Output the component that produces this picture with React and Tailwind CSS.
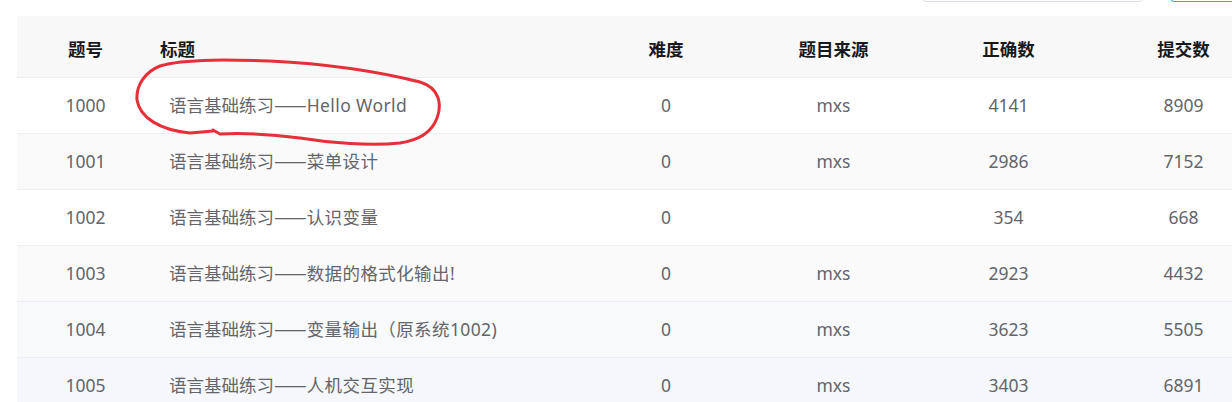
import React from "react";

const rows = [
  { id: 1000, title: "Hello World", level: 0, source: "mxs", ac: 4141, submit: 8909, bg: "bg-white" },
  { id: 1001, title: "菜单设计", level: 0, source: "mxs", ac: 2986, submit: 7152, bg: "bg-[#fafafa]" },
  { id: 1002, title: "认识变量", level: 0, source: "", ac: 354, submit: 668, bg: "bg-white" },
  { id: 1003, title: "数据的格式化输出!", level: 0, source: "mxs", ac: 2923, submit: 4432, bg: "bg-[#fafafa]" },
  { id: 1004, title: "变量输出（原系统1002)", level: 0, source: "mxs", ac: 3623, submit: 5505, bg: "bg-[#f8f9fb]" },
  { id: 1005, title: "人机交互实现", level: 0, source: "mxs", ac: 3403, submit: 6891, bg: "bg-[#f5f7fa]" },
];

const cols = "grid grid-cols-[137px_432px_160px_175px_175px_175px]";

export default function App() {
  return (
    <div className="relative w-[1232px] h-[402px] overflow-hidden bg-white font-['Noto_Sans','Noto_Sans_CJK_SC',sans-serif]">
      {/* Toolbar (mostly scrolled off the top) */}
      <div className="flex items-end h-4 overflow-hidden pl-[922px]">
        <div className="shrink-0 w-[221px] h-[34px] mb-[14px] rounded border border-[#dcdfe6] bg-white"></div>
        <div className="shrink-0 w-[90px] h-[34px] mb-[14px] ml-[27px] rounded border border-[#409eff] bg-white"></div>
      </div>

      {/* Table */}
      <div className="ml-[17px] w-[1254px]">
        <div className={`${cols} h-[62px] pt-[6px] items-center bg-[#f8f8f9] border-b border-[#ebeef5] text-[17.5px] font-bold text-[#17191c]`}>
          <div className="text-center">题号</div>
          <div className="pl-[6px]">标题</div>
          <div className="text-center">难度</div>
          <div className="text-center">题目来源</div>
          <div className="text-center">正确数</div>
          <div className="text-center">提交数</div>
        </div>
        {rows.map((r) => (
          <div
            key={r.id}
            className={`${cols} h-[56px] items-center border-b border-[#ebeef5] text-[17.5px] text-[#63656b] ${r.bg}`}
          >
            <div className="text-center">{r.id}</div>
            <div className="pl-[15px] whitespace-nowrap">
              语言基础练习
              <span className="text-[19.5px] leading-none font-['Noto_Sans_CJK_SC',sans-serif]">——</span>
              <span className="tracking-[0.4px]">{r.title}</span>
            </div>
            <div className="text-center">{r.level}</div>
            <div className="text-center">{r.source}</div>
            <div className="text-center">{r.ac}</div>
            <div className="text-center">{r.submit}</div>
          </div>
        ))}
      </div>

      {/* Hand-drawn annotation */}
      <svg className="absolute left-0 top-0 pointer-events-none" width="1232" height="402">
        <path
          d="M213 131 L190 133 C160 130 140 118 137 100 C136 85 145 72 160 66 C185 58 240 60 270 61 C330 64 380 72 420 82 C440 88 442 105 437 118 C432 132 420 140 400 143 C370 146 330 143 300 138 C270 134 240 133 220 134 L213 130"
          fill="none"
          stroke="#e5303a"
          strokeWidth="3"
          strokeLinecap="round"
          strokeLinejoin="round"
        />
      </svg>
    </div>
  );
}
